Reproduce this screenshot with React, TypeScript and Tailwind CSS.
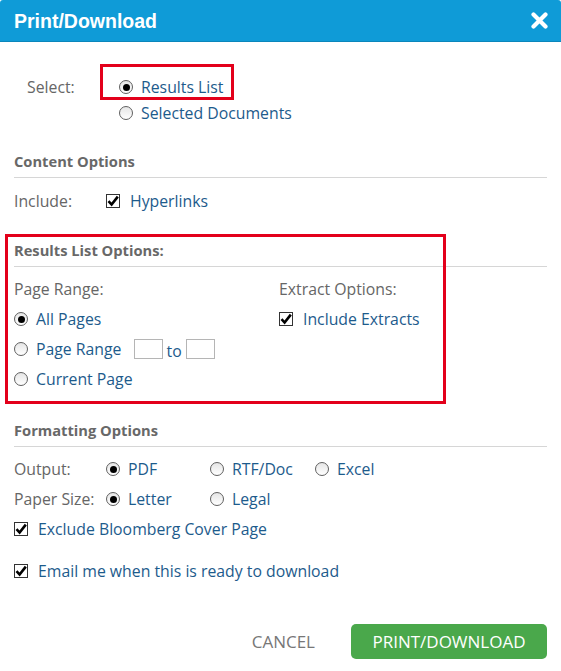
import React from "react";

const font = { fontFamily: '"Open Sans", "Liberation Sans", sans-serif' };

function Radio({ checked }: { checked?: boolean }) {
  return (
    <span className="w-[14px] h-[14px] rounded-full border border-[#5f5f5f] bg-gradient-to-b from-[#e6e6e6] to-white flex items-center justify-center shrink-0">
      {checked ? <span className="w-[7px] h-[7px] rounded-full bg-black" /> : null}
    </span>
  );
}

function Check() {
  return (
    <span className="w-[14px] h-[14px] border border-[#333] bg-white flex items-center justify-center shrink-0">
      <svg width="12" height="12" viewBox="0 0 12 12">
        <path d="M1.5 6.2 L4.6 9.6 L10.8 1.6" fill="none" stroke="#000" strokeWidth="2.6" />
      </svg>
    </span>
  );
}

function Opt({ radio, checked, label, className = "" }: { radio?: boolean; checked?: boolean; label: string; className?: string }) {
  return (
    <div className={`flex items-center ${radio ? "gap-[8px]" : "gap-[10px]"} text-[#1d5b8c] ${className}`}>
      {radio ? <Radio checked={checked} /> : <Check />}
      <span>{label}</span>
    </div>
  );
}

function SectionHead({ title, mt }: { title: string; mt: string }) {
  return (
    <div className={`h-[33px] flex items-center border-b border-[#d6d6d6] text-[14.7px] font-bold text-[#686868] ${mt}`}>
      {title}
    </div>
  );
}

export default function App() {
  return (
    <div className="w-[561px] h-[671px] bg-white relative overflow-hidden text-[15.8px] leading-[20px]" style={font}>
      {/* header */}
      <div className="h-[42px] bg-[#0f9bd7] border-b border-[#0b86bb] flex items-center justify-between pl-[14px] pr-[13px] rounded-t-[3px]">
        <span className="text-white text-[19.5px] font-bold" style={{ fontFamily: '"Liberation Sans", Arial, sans-serif' }}>
          Print/Download
        </span>
        <svg width="17" height="17" viewBox="0 0 17 17">
          <path d="M2.5 2.5 L14.5 14.5 M14.5 2.5 L2.5 14.5" stroke="#fff" strokeWidth="4.2" strokeLinecap="round" />
        </svg>
      </div>

      <div className="px-[14px]">
        {/* select */}
        <div className="mt-[32px] flex">
          <div className="w-[105px] pl-[13px] h-[26px] flex items-center text-[#666]">Select:</div>
          <div className="flex flex-col">
            <Opt radio checked label="Results List" className="h-[26px]" />
            <Opt radio label="Selected Documents" className="h-[26px]" />
          </div>
        </div>

        <SectionHead title="Content Options" mt="mt-[19px]" />
        <div className="mt-[8px] h-[30px] flex items-center">
          <div className="w-[92px] text-[#666]">Include:</div>
          <Opt label="Hyperlinks" />
        </div>

        <SectionHead title="Results List Options:" mt="mt-[18px]" />
        <div className="mt-[7px] flex">
          <div className="w-[265px] flex flex-col">
            <div className="h-[30px] flex items-center text-[#666]">Page Range:</div>
            <Opt radio checked label="All Pages" className="h-[30px]" />
            <div className="h-[30px] flex items-center">
              <Opt radio label="Page Range" />
              <input className="ml-[12px] w-[29px] h-[20px] border border-[#b5b5b5] outline-none" />
              <span className="mx-[4px] mt-[4px] text-[#1d5b8c]">to</span>
              <input className="w-[29px] h-[20px] border border-[#b5b5b5] outline-none" />
            </div>
            <Opt radio label="Current Page" className="h-[30px]" />
          </div>
          <div className="flex flex-col">
            <div className="h-[30px] flex items-center text-[#666]">Extract Options:</div>
            <Opt label="Include Extracts" className="h-[30px]" />
          </div>
        </div>

        <SectionHead title="Formatting Options" mt="mt-[20px]" />
        <div className="mt-[7px] h-[30px] flex items-center">
          <div className="w-[92px] text-[#666]">Output:</div>
          <Opt radio checked label="PDF" className="w-[104px]" />
          <Opt radio label="RTF/Doc" className="w-[105px]" />
          <Opt radio label="Excel" />
        </div>
        <div className="h-[30px] flex items-center">
          <div className="w-[92px] text-[#666]">Paper Size:</div>
          <Opt radio checked label="Letter" className="w-[104px]" />
          <Opt radio label="Legal" />
        </div>
        <Opt label="Exclude Bloomberg Cover Page" className="h-[29px]" />
        <Opt label="Email me when this is ready to download" className="mt-[13px] h-[30px]" />

        {/* footer */}
        <div className="mt-[38px] flex items-center justify-end gap-[36px]">
          <span className="text-[17px] text-[#777]">CANCEL</span>
          <button className="w-[196px] h-[35px] rounded-[5px] bg-[#4aa84b] text-white text-[17px]">PRINT/DOWNLOAD</button>
        </div>
      </div>

      {/* red annotation boxes */}
      <div className="absolute left-[100px] top-[64px] w-[134px] h-[36px] border-[3px] border-[#e3001b]" />
      <div className="absolute left-[5px] top-[234px] w-[441px] h-[170px] border-[3px] border-[#e3001b]" />
    </div>
  );
}
